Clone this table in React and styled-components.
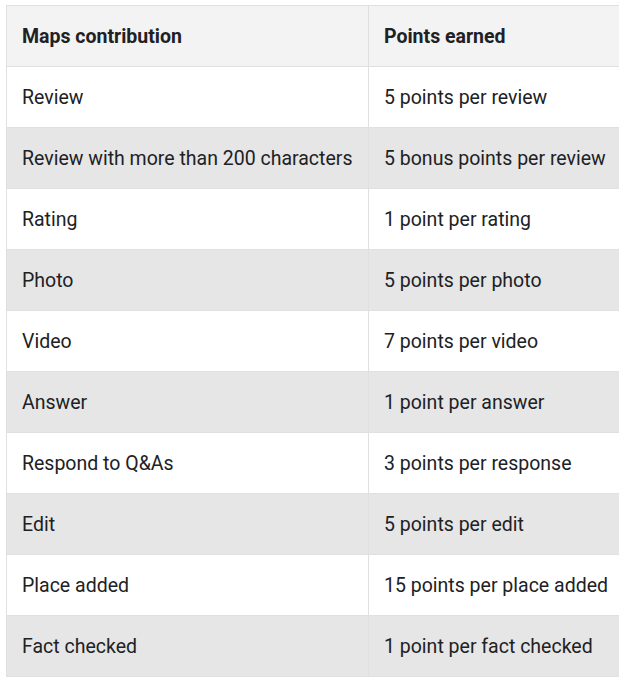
import React from 'react';
import styled, { createGlobalStyle } from 'styled-components';

const rows = [
  ['Review', '5 points per review'],
  ['Review with more than 200 characters', '5 bonus points per review'],
  ['Rating', '1 point per rating'],
  ['Photo', '5 points per photo'],
  ['Video', '7 points per video'],
  ['Answer', '1 point per answer'],
  ['Respond to Q&As', '3 points per response'],
  ['Edit', '5 points per edit'],
  ['Place added', '15 points per place added'],
  ['Fact checked', '1 point per fact checked'],
];

const Global = createGlobalStyle`
  body {
    margin: 0;
    background: #fff;
    font-family: Roboto, "Liberation Sans", sans-serif;
    color: #202124;
  }
`;

const Page = styled.div`
  padding: 5px 0 0 6px;
  width: 619px;
  height: 678px;
  box-sizing: border-box;
  overflow: hidden;
`;

const Table = styled.table`
  border-collapse: collapse;
  width: 720px;
  table-layout: fixed;
`;

const Cell = styled.td`
  height: 59px;
  padding: 1px 15px 0;
  border: 1px solid #e0e0e0;
  font-size: 19.5px;
  line-height: 24px;
  text-align: left;
  vertical-align: middle;
  white-space: nowrap;
  font-weight: ${p => (p.$head ? 700 : 400)};
`;

const Row = styled.tr`
  background: ${p => (p.$head ? '#f3f3f3' : p.$shade ? '#e6e6e6' : '#fff')};
`;

export default function App() {
  return (
    <Page>
      <Global />
      <Table>
        <colgroup>
          <col style={{ width: 362 }} />
          <col />
        </colgroup>
        <thead>
          <Row $head>
            <Cell as="th" $head>Maps contribution</Cell>
            <Cell as="th" $head>Points earned</Cell>
          </Row>
        </thead>
        <tbody>
          {rows.map(([a, b], i) => (
            <Row key={a} $shade={i % 2 === 1}>
              <Cell>{a}</Cell>
              <Cell>{b}</Cell>
            </Row>
          ))}
        </tbody>
      </Table>
    </Page>
  );
}
